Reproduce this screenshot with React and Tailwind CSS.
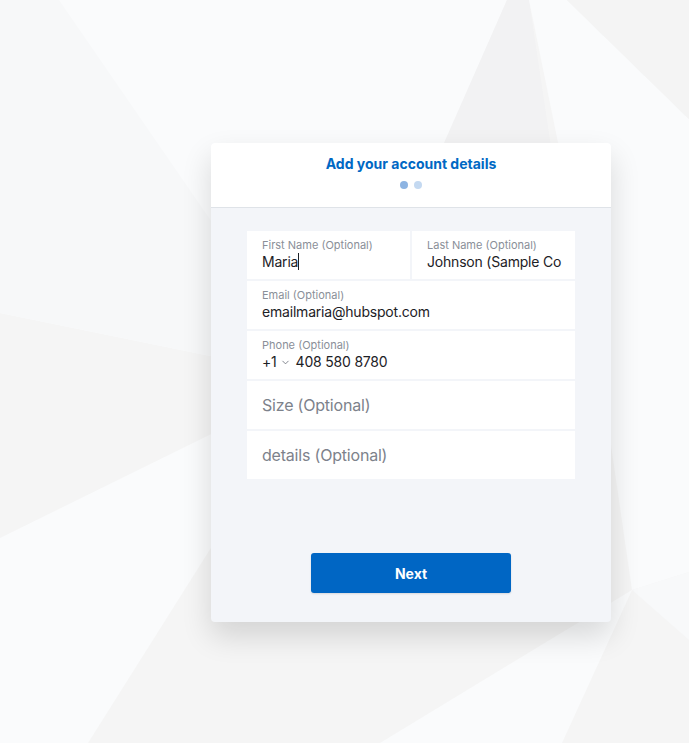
import { ChevronDown } from 'lucide-react'

function Background() {
  // faint low-poly backdrop
  return (
    <svg className="absolute inset-0 w-full h-full" viewBox="0 0 689 743" preserveAspectRatio="none">
      <rect width="689" height="743" fill="#f5f5f5" />
      <polygon points="0,0 507,0 420,200 300,350 220,358 0,313" fill="#fafbfc" />
      <polygon points="0,0 59,0 300,350 220,358 0,313" fill="#f7f8f9" />
      <polygon points="507,0 529,0 562,220 410,220" fill="#f2f2f3" />
      <polygon points="529,0 567,0 689,119 689,572 632,590 590,300" fill="#fafbfc" />
      <polygon points="567,0 689,0 689,119" fill="#f4f4f4" />
      <polygon points="0,538 260,410 260,470 88,743 0,743" fill="#fafbfc" />
      <polygon points="380,743 632,590 562,743" fill="#fafbfc" />
      <polygon points="632,590 689,572 689,640" fill="#f8f9fa" />
    </svg>
  )
}

function Field({ label, children }) {
  return (
    <div className="bg-white h-[48px] px-[15px] pt-[8px]">
      <p className="text-[11px] leading-[13px] text-[#8a8f98]">{label}</p>
      <div className="mt-[1px] text-[14px] leading-[18px] tracking-[-0.2px] text-[#1d2126] whitespace-nowrap">
        {children}
      </div>
    </div>
  )
}

export default function App() {
  return (
    <div className="relative w-full h-[743px] overflow-hidden font-['Inter',sans-serif]">
      <Background />

      <div className="relative ml-[211px] pt-[143px]">
        <div className="w-[400px] rounded-[4px] bg-[#f3f5f9] shadow-[0_14px_30px_rgba(0,0,0,0.14)] overflow-hidden">
          {/* Header */}
          <div className="bg-white border-b border-[#dfe3e8] h-[65px] pt-[11px] flex flex-col items-center">
            <h2 className="text-[14px] leading-5 font-bold text-[#0068c4]">Add your account details</h2>
            <div className="flex gap-[6px] mt-[7px]">
              <span className="w-2 h-2 rounded-full bg-[#8db4e2]" />
              <span className="w-2 h-2 rounded-full bg-[#c4d9f1]" />
            </div>
          </div>

          {/* Fields */}
          <div className="px-9 pt-[23px] pb-[29px]">
            <div className="flex flex-col gap-[2px]">
              <div className="grid grid-cols-2 gap-[2px]">
                <Field label="First Name (Optional)">
                  <span>Maria</span>
                  <span className="inline-block w-px h-[17px] bg-[#1d2126] align-[-3px]" />
                </Field>
                <Field label="Last Name (Optional)">Johnson (Sample Co</Field>
              </div>
              <Field label="Email (Optional)">emailmaria@hubspot.com</Field>
              <Field label="Phone (Optional)">
                <div className="flex items-center">
                  <span>+1</span>
                  <ChevronDown size={11} strokeWidth={1.8} className="text-[#6b7079] ml-[3px] mr-[5px] mt-[1px]" />
                  <span>408 580 8780</span>
                </div>
              </Field>
              <div className="bg-white h-[48px] px-[15px] flex items-center text-[16px] tracking-[-0.2px] text-[#7d828b]">
                Size (Optional)
              </div>
              <div className="bg-white h-[48px] px-[15px] flex items-center text-[16px] tracking-[-0.2px] text-[#7d828b]">
                details (Optional)
              </div>
            </div>

            <div className="flex justify-center mt-[74px]">
              <button className="w-[200px] h-[40px] rounded-[3px] bg-[#0066c4] text-white text-[14px] font-bold shadow-[0_1px_2px_rgba(0,0,0,0.12)]">
                Next
              </button>
            </div>
          </div>
        </div>
      </div>
    </div>
  )
}
